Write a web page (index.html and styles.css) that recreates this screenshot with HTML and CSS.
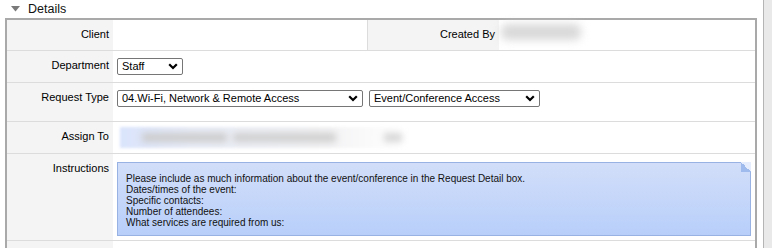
FILE: index.html
```html
<!DOCTYPE html>
<html>
<head>
<meta charset="utf-8">
<link rel="stylesheet" href="styles.css">
</head>
<body>
<div class="page">
  <div class="main">
    <div class="section-head">
      <svg class="caret" width="9" height="6" viewBox="0 0 9 6"><path d="M0 0 H9 L4.5 5.5 Z" fill="#7a7a7a"/></svg>
      <span class="section-title">Details</span>
    </div>
    <div class="details">
      <div class="lab">Client</div>
      <div class="val"></div>
      <div class="lab lab-mid">Created By</div>
      <div class="val"><div class="blur-name"></div></div>

      <div class="lab">Department</div>
      <div class="val wide">
        <span class="sel sel-dept"><select><option>Staff</option></select><svg class="chev" width="10" height="7" viewBox="0 0 10 7"><path d="M1.2 1.2 L5 5 L8.8 1.2" fill="none" stroke="#000" stroke-width="2.2"/></svg></span>
      </div>

      <div class="lab">Request Type</div>
      <div class="val wide sel-row">
        <span class="sel sel-type"><select><option>04.Wi-Fi, Network &amp; Remote Access</option></select><svg class="chev" width="10" height="7" viewBox="0 0 10 7"><path d="M1.2 1.2 L5 5 L8.8 1.2" fill="none" stroke="#000" stroke-width="2.2"/></svg></span>
        <span class="sel sel-sub"><select><option>Event/Conference Access</option></select><svg class="chev" width="10" height="7" viewBox="0 0 10 7"><path d="M1.2 1.2 L5 5 L8.8 1.2" fill="none" stroke="#000" stroke-width="2.2"/></svg></span>
      </div>

      <div class="lab">Assign To</div>
      <div class="val wide val-assign">
        <div class="assign-box">
          <div class="blur-a"></div>
          <div class="blur-b"></div>
          <div class="blur-c"></div>
        </div>
      </div>

      <div class="lab">Instructions</div>
      <div class="val wide val-instr">
        <div class="note">
          <span class="note-fold"></span>
          <div>Please include as much information about the event/conference in the Request Detail box.</div>
          <div>Dates/times of the event:</div>
          <div>Specific contacts:</div>
          <div>Number of attendees:</div>
          <div>What services are required from us:</div>
        </div>
      </div>

      <div class="lab last"></div>
      <div class="val wide last"></div>
    </div>
  </div>
  <div class="scroll-strip"></div>
</div>
</body>
</html>
```

FILE: styles.css
```css
html, body {
  margin: 0;
  padding: 0;
  background: #ffffff;
  font-family: "Liberation Sans", Arial, sans-serif;
  color: #000;
}

.page {
  display: flex;
  height: 248px;
  overflow: hidden;
}

.main {
  width: 757px;
  padding-left: 5px;
  box-sizing: border-box;
  display: flex;
  flex-direction: column;
}

.scroll-strip {
  margin-left: 6px;
  flex: 1;
  background: #e9e9e9;
  border-left: 1px solid #b4b4b4;
}

.section-head {
  height: 18px;
  flex: none;
  display: flex;
  align-items: flex-start;
}

.caret {
  margin: 6px 0 0 6px;
}

.section-title {
  margin-left: 8px;
  font-size: 12.5px;
  line-height: 16px;
  margin-top: 1px;
  color: #111;
}

.details {
  flex: 1;
  display: grid;
  grid-template-columns: 106px 254px 132px 1fr;
  grid-template-rows: 31px 32px 39px 32px 87px 1fr;
  border: 2px solid #a9a9a9;
  border-bottom: none;
  font-size: 11px;
}

.lab, .val {
  border-bottom: 1px solid #dcdcdc;
  box-sizing: border-box;
  min-width: 0;
}

.lab {
  background: #f4f4f4;
  text-align: right;
  padding: 7px 4px 0 0;
  line-height: 14px;
}

.lab-mid {
  border-left: 1px solid #dcdcdc;
}

.val.wide {
  grid-column: 2 / 5;
  padding: 7px 0 0 4px;
}

.last {
  border-bottom: none;
}

.blur-name {
  margin: 4px 0 0 2px;
  width: 80px;
  height: 16px;
  background: #d9d9d9;
  filter: blur(4px);
  border-radius: 6px;
}

.sel-row {
  display: flex;
  align-items: flex-start;
  gap: 6px;
}

.sel {
  position: relative;
  display: inline-block;
  height: 17px;
  vertical-align: top;
}

.sel select {
  appearance: none;
  -webkit-appearance: none;
  height: 17px;
  box-sizing: border-box;
  border: 1px solid #767676;
  border-radius: 2px;
  background: #fff;
  font-family: "Liberation Sans", Arial, sans-serif;
  font-size: 11px;
  line-height: 15px;
  color: #000;
  padding: 0 0 0 4px;
  margin: 0;
  display: block;
}

.sel-dept select { width: 66px; }
.sel-type select { width: 246px; }
.sel-sub select { width: 171px; }

.chev {
  position: absolute;
  right: 5px;
  top: 5px;
}

.val.val-assign {
  padding: 5px 0 0 7px;
}

.assign-box {
  width: 282px;
  height: 21px;
  background: linear-gradient(to right, #d9e3fb 0%, #e9edf8 25%, #f2f2f4 70%, #ffffff 100%);
  filter: blur(1.5px);
  display: flex;
  align-items: center;
}

.blur-a {
  margin-left: 22px;
  width: 92px;
  height: 9px;
  background: #cbcbcb;
  filter: blur(3px);
}

.blur-b {
  margin-left: 6px;
  width: 112px;
  height: 9px;
  background: #cfcfcf;
  filter: blur(3px);
}

.blur-c {
  margin-left: 48px;
  width: 20px;
  height: 9px;
  background: #d6d6d6;
  filter: blur(3px);
}

.val.val-instr {
  padding: 8px 0 0 4px;
}

.note {
  position: relative;
  width: 634px;
  height: 74px;
  box-sizing: border-box;
  border: 1px solid #98b2e4;
  background: linear-gradient(to bottom, #d2def9 0%, #b8cffa 100%);
  padding: 10px 0 0 8px;
  font-size: 10px;
  line-height: 11px;
  color: #111;
}

.note-fold {
  position: absolute;
  right: -1px;
  top: -1px;
  width: 10px;
  height: 10px;
  background: linear-gradient(to bottom left, #e6edfc 50%, #9fbbee 50%);
}
```
